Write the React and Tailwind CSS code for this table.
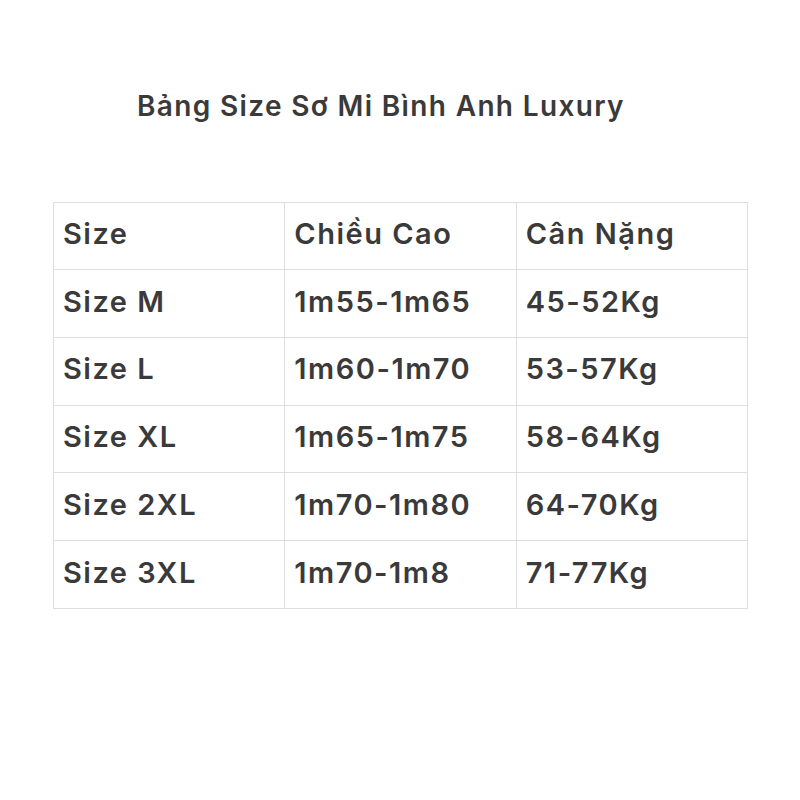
import React from "react";

const rows = [
  ["Size M", "1m55-1m65", "45-52Kg"],
  ["Size L", "1m60-1m70", "53-57Kg"],
  ["Size XL", "1m65-1m75", "58-64Kg"],
  ["Size 2XL", "1m70-1m80", "64-70Kg"],
  ["Size 3XL", "1m70-1m8", "71-77Kg"],
];

const App = () => {
  return (
    <div
      className="w-[800px] h-[800px] bg-white text-[#3a3a3a]"
      style={{ fontFamily: "Inter, 'Noto Sans', sans-serif" }}
    >
      <div className="pt-[88px] pl-[137px] text-[28px] leading-[36px] font-semibold tracking-[1.35px]">
        Bảng Size Sơ Mi Bình Anh Luxury
      </div>

      <div className="mt-[78px] ml-[53px] w-[695px]">
        <table className="w-full border-collapse table-fixed text-[29px] font-semibold tracking-[1.5px]">
          <thead>
            <tr className="h-[67px]">
              <th className="border border-[#dedede] text-left font-semibold pl-[9px] pb-[4px]">Size</th>
              <th className="border border-[#dedede] text-left font-semibold pl-[9px] pb-[4px]">Chiều Cao</th>
              <th className="border border-[#dedede] text-left font-semibold pl-[9px] pb-[4px]">Cân Nặng</th>
            </tr>
          </thead>
          <tbody>
            {rows.map((row) => (
              <tr key={row[0]} className="h-[67.8px]">
                {row.map((cell, i) => (
                  <td key={i} className="border border-[#dedede] pl-[9px] pb-[4px]">
                    {cell}
                  </td>
                ))}
              </tr>
            ))}
          </tbody>
        </table>
      </div>
    </div>
  );
};

export default App;
